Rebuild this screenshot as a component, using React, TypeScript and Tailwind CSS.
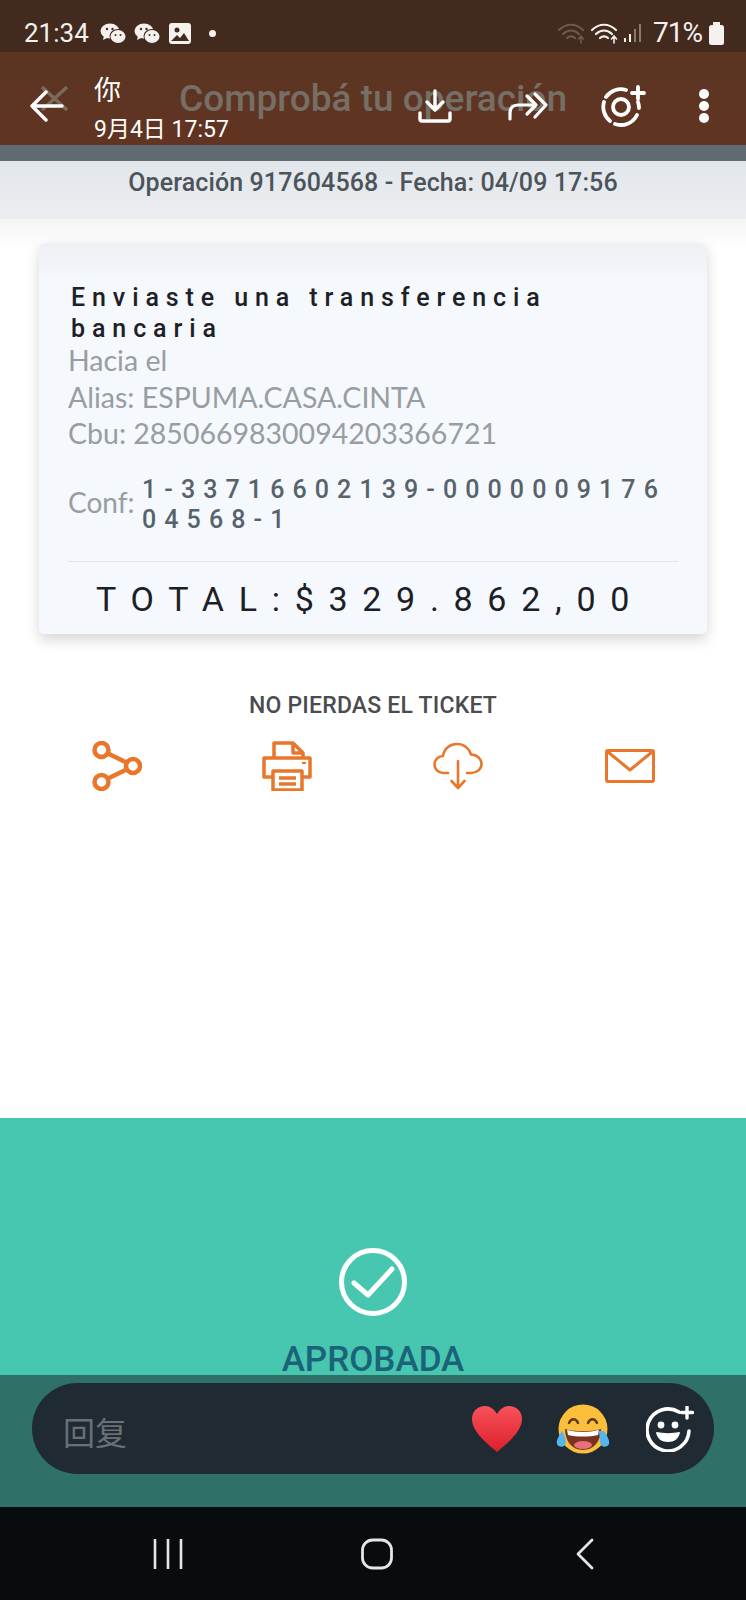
const roboto = "font-['Roboto',sans-serif]";

const WeChat = () => (
  <svg width="27" height="21" viewBox="0 0 27 21" fill="#f4f1ee">
    <ellipse cx="10" cy="8" rx="9.5" ry="7.5" />
    <path d="M4 13l-1 4 5-2.500z" />
    <ellipse cx="18" cy="13" rx="8.500" ry="7" fill="#432a1f" />
    <ellipse cx="18" cy="13.500" rx="7.500" ry="6.500" />
    <circle cx="7" cy="6" r="1.200" fill="#432a1f" />
    <circle cx="12.500" cy="6" r="1.200" fill="#432a1f" />
    <circle cx="15.500" cy="12" r="1" fill="#432a1f" />
    <circle cx="20.500" cy="12" r="1" fill="#432a1f" />
  </svg>
);

const Wifi = ({ color }: { color: string }) => (
  <svg width="30" height="24" viewBox="0 0 30 24" fill="none" stroke={color} strokeWidth="2.200" strokeLinecap="round">
    <path d="M2 9c7-7 17-7 24 0" />
    <path d="M6 13c5-4.500 11-4.500 16 0" />
    <path d="M10 17c2.500-2 5.500-2 8 0" />
    <path d="M24 15v7M21.500 18l2.500-3 2.500 3" strokeWidth="1.600" />
  </svg>
);

const ShareIcon = () => (
  <svg width="50" height="50" viewBox="0 0 50 50" fill="none" stroke="#e8772b" strokeWidth="4.500">
    <circle cx="9.500" cy="9" r="7" />
    <circle cx="9.500" cy="41" r="7" />
    <circle cx="41" cy="25" r="7" />
    <path d="M16 12.500l18.500 9M16 37.500l18.500-9" />
  </svg>
);

const PrinterIcon = () => (
  <svg width="50" height="50" viewBox="0 0 50 50" fill="none" stroke="#e8772b" strokeWidth="3.500" strokeLinejoin="round">
    <path d="M12 17V2h19l10 10v5" />
    <path d="M31 3v9h9" />
    <path d="M10 36H2V17h46v19h-8" />
    <path d="M40 22h4" strokeWidth="2" />
    <rect x="11" y="30" width="29" height="19" />
    <path d="M17 37h17M17 43h17" />
  </svg>
);

const CloudIcon = () => (
  <svg width="50" height="50" viewBox="0 0 50 50" fill="none" stroke="#e8772b" strokeWidth="2.600" strokeLinecap="round" strokeLinejoin="round">
    <path d="M15 32H10C5 32 1.500 28 1.500 23.500S5 15 10 15c1-7.500 7-12 14-12 7 0 12 4.500 14 10.500 6 0 10.500 4.500 10.500 9.500S44 32 38 32h-4" />
    <path d="M25 20v27M18.500 40l6.500 7 6.500-7" />
  </svg>
);

const MailIcon = () => (
  <svg width="50" height="34" viewBox="0 0 50 34" fill="none" stroke="#e8772b" strokeWidth="3" strokeLinejoin="round">
    <rect x="1.500" y="1.500" width="47" height="31" rx="1.500" />
    <path d="M3 3l22 18L47 3" />
  </svg>
);

const LaughEmoji = () => (
  <svg width="54" height="50" viewBox="0 0 54 50">
    <circle cx="27" cy="25" r="24.500" fill="#fbbf3c" />
    <path d="M13 19c2-5 7-5 9 0M32 19c2-5 7-5 9 0" fill="none" stroke="#5c3a14" strokeWidth="2.400" strokeLinecap="round" />
    <path d="M9 25c10 3 26 3 36 0 0 12-7 21-18 21S9 37 9 25z" fill="#7a3320" />
    <path d="M11 26c10 2.500 22 2.500 32 0l-1 5c-9 2-21 2-30 0z" fill="#fff" />
    <ellipse cx="27" cy="41" rx="9" ry="4" fill="#e8707a" />
    <path d="M6 27c-3 5-6 9-5 13 1 3 6 4 8 1 2-3 0-9-3-14zM48 27c3 5 6 9 5 13-1 3-6 4-8 1-2-3 0-9-3-14z" fill="#55b6ee" />
  </svg>
);

export default function App() {
  return (
    <div className={`${roboto} relative flex h-[1600px] w-[746px] flex-col overflow-hidden bg-white`}>
      {/* status bar */}
      <div className="relative flex h-[52px] shrink-0 items-center bg-[#432a1f] pl-6 pr-[22px] pt-[14px] text-[#f4f1ee]">
        <span className="w-[76px] text-[26px] leading-none">21:34</span>
        <WeChat />
        <span className="ml-[7px]"><WeChat /></span>
        <svg className="ml-[8px]" width="22" height="21" viewBox="0 0 22 21">
          <rect width="22" height="21" rx="3" fill="#f4f1ee" />
          <circle cx="8" cy="7" r="2.500" fill="#432a1f" />
          <path d="M2 18l6-6 3 3 4-5 5 8z" fill="#432a1f" />
        </svg>
        <span className="ml-[18px] h-[7px] w-[7px] rounded-full bg-[#f4f1ee]" />
        <div className="ml-auto flex items-center">
          <Wifi color="#6d5a50" />
          <span className="ml-[3px]"><Wifi color="#f4f1ee" /></span>
          <svg className="ml-[3px]" width="21" height="22" viewBox="0 0 21 22">
            <path d="M2 16v4M7 12v8" stroke="#f4f1ee" strokeWidth="2" />
            <path d="M12 7v13M17 2v18" stroke="#8a7a70" strokeWidth="2" />
          </svg>
          <span className="ml-[9px] w-[51px] text-[28px] leading-none tracking-[-1px]">71%</span>
          <svg className="ml-[5px]" width="15" height="23" viewBox="0 0 15 23" fill="#f4f1ee">
            <rect x="4" y="0" width="7" height="3" />
            <rect x="0" y="3" width="15" height="20" rx="2.500" />
          </svg>
        </div>
      </div>

      {/* header */}
      <div className="relative flex h-[93px] shrink-0 items-center bg-gradient-to-b from-[#5a3522] to-[#623422] pt-[14px] text-white">
        {/* page underneath, showing through */}
        <svg className="absolute left-[40px] top-[33px]" width="29" height="27" viewBox="0 0 29 27" stroke="#7b6a5c" strokeWidth="3.500">
          <path d="M2 2l25 23M27 2L2 25" />
        </svg>
        <span className="absolute left-[179px] top-[23px] text-[37px] font-medium leading-[48px] text-[#756f65]">
          Comprobá tu operación
        </span>

        <svg className="relative ml-[30px]" width="34" height="32" viewBox="0 0 34 32" fill="none" stroke="#fff" strokeWidth="3.400" strokeLinecap="round" strokeLinejoin="round">
          <path d="M32 16H3M16 2L2 16l14 14" />
        </svg>
        <div className="relative ml-[30px] mt-[6px] flex w-[137px] flex-col font-['Roboto','Noto_Sans_CJK_SC',sans-serif]">
          <span className="text-[27px] leading-[34px]">你</span>
          <span className="mt-[9px] whitespace-nowrap text-[23px] leading-[26px]">9月4日 17:57</span>
        </div>
        <svg className="relative ml-[187px]" width="34" height="34" viewBox="0 0 34 34" fill="none" stroke="#fff" strokeWidth="3.400" strokeLinecap="round" strokeLinejoin="round">
          <path d="M17 2v18M9 13l8 8 8-8" />
          <path d="M2 24v6c0 1.500 1 2 2 2h26c1 0 2-.5 2-2v-6" />
        </svg>
        <svg className="relative ml-[56px]" width="41" height="30" viewBox="0 0 41 30" fill="none" stroke="#fff" strokeWidth="3.200" strokeLinecap="round" strokeLinejoin="round">
          <path d="M2 28v-6c0-5 3-8 8-8h18M19 5l9 9-9 9" />
          <path d="M27 3l11 11-11 12" />
        </svg>
        <svg className="relative ml-[52px]" width="46" height="42" viewBox="0 0 46 42" fill="none" stroke="#fff" strokeWidth="3.800" strokeLinecap="round">
          <circle cx="20" cy="22" r="8" />
          <path d="M25 5A18 18 0 0 0 5 12M3 17a18 18 0 0 0 6 19M14 39a18 18 0 0 0 22-9M38 23a18 18 0 0 0-1-6" />
          <path d="M37 2v12M31 8h12" />
        </svg>
        <div className="relative ml-[52px] flex flex-col gap-[2px]">
          <span className="h-[10px] w-[10px] rounded-full bg-white" />
          <span className="h-[10px] w-[10px] rounded-full bg-white" />
          <span className="h-[10px] w-[10px] rounded-full bg-white" />
        </div>
      </div>

      <div className="h-4 shrink-0 bg-[#5f6a72]" />

      {/* operation strip */}
      <div className="flex h-[58px] shrink-0 justify-center bg-gradient-to-b from-[#e2e6ea] to-[#eceef1] pt-[7px] text-[25px] font-medium leading-[30px] tracking-[0.100px] text-[#4c545b]">
        Operación 917604568 - Fecha: 04/09 17:56
      </div>

      {/* page body */}
      <div className="flex flex-1 flex-col bg-gradient-to-b from-[#f4f4f4] to-white to-[30px] pt-6">
        <div className="mx-[39px] h-[391px] rounded-[6px] bg-gradient-to-b from-[#eef0f3] to-[#f5f8fc] to-[40px] px-[29px] pt-[39px] shadow-[0_6px_14px_rgba(0,0,0,0.16)]">
          <p className="pl-[3px] text-[25px] font-medium leading-[31px] tracking-[6.900px] text-[#1d2126]">
            Enviaste una transferencia bancaria
          </p>
          <div className="mt-[-2px] font-['Lato',sans-serif] text-[28.500px] leading-[36.500px] text-[#989da2]">
            <p>Hacia el</p>
            <p>Alias: ESPUMA.CASA.CINTA</p>
            <p>Cbu: 2850669830094203366721</p>
          </div>
          <div className="mt-[23px] flex items-center">
            <span className="mb-[5px] w-[74px] shrink-0 font-['Lato',sans-serif] text-[28px] text-[#989da2]">Conf:</span>
            <span className="break-all text-[25px] font-medium leading-[30px] tracking-[8.100px] text-[#56626c]">
              1-33716602139-000000917604568-1
            </span>
          </div>
          <div className="mt-[26px] h-px bg-[#e2e5e8]" />
          <p className="mt-[16px] whitespace-nowrap pl-[28px] text-[34px] leading-[42px] tracking-[14.700px] text-[#1c2026]">
            TOTAL:$329.862,00
          </p>
        </div>

        <p className="mt-[59px] text-center text-[23px] font-medium leading-[26px] tracking-[0.200px] text-[#4a4d50]">
          NO PIERDAS EL TICKET
        </p>
        <div className="mt-[22px] flex items-center pl-[92px]">
          <ShareIcon />
          <span className="ml-[120px]"><PrinterIcon /></span>
          <span className="ml-[121px]"><CloudIcon /></span>
          <span className="ml-[122px]"><MailIcon /></span>
        </div>
      </div>

      {/* approved banner */}
      <div className="flex h-[257px] shrink-0 flex-col items-center bg-[#47c6b0] pt-[130px]">
        <svg width="68" height="68" viewBox="0 0 68 68" fill="none" stroke="#fff" strokeLinecap="round" strokeLinejoin="round">
          <circle cx="34" cy="34" r="31.500" strokeWidth="5" />
          <path d="M15 35l14 12 24-26" strokeWidth="5" />
        </svg>
        <span className="mt-[29px] text-[35px] font-medium leading-[30px] text-[#1b6378]">APROBADA</span>
      </div>

      {/* reply bar */}
      <div className="h-[132px] shrink-0 bg-[#2f7068] px-8 pt-2">
        <div className="flex h-[91px] items-center rounded-[46px] bg-[#1f2a33] pl-[31px] pr-5">
          <span className="mt-[4px] font-['Noto_Sans_CJK_SC',sans-serif] text-[32px] leading-none text-[#6a7074]">回复</span>
          <svg className="ml-auto" width="52" height="46" viewBox="0 0 52 46">
            <defs>
              <linearGradient id="heart" x1="0" y1="0" x2="0" y2="1">
                <stop offset="0" stopColor="#f8525a" />
                <stop offset="1" stopColor="#dc1f2a" />
              </linearGradient>
            </defs>
            <path d="M26 46C14 36 1 25 1 13 1 5 7 0 14 0c5 0 9 3 12 8 3-5 7-8 12-8 7 0 13 5 13 13 0 12-13 23-25 33z" fill="url(#heart)" />
          </svg>
          <span className="ml-[33px]"><LaughEmoji /></span>
          <svg className="ml-[36px]" width="48" height="46" viewBox="0 0 48 46" fill="none" stroke="#fff" strokeLinecap="round">
            <path d="M33 6A21 21 0 1 0 43 25" strokeWidth="3.600" />
            <path d="M41 1v11M35.500 6.500h11" strokeWidth="3.400" />
            <circle cx="15" cy="19" r="3.400" fill="#fff" stroke="none" />
            <circle cx="29" cy="19" r="3.400" fill="#fff" stroke="none" />
            <path d="M10 26c8 1.500 16 1.500 24 0-1 7-6 10-12 10s-11-3-12-10z" fill="#fff" stroke="none" />
          </svg>
        </div>
      </div>

      {/* nav bar */}
      <div className="flex h-[93px] shrink-0 items-start bg-[#080c0e] pl-[153px] pt-[31px]">
        <svg width="30" height="32" viewBox="0 0 30 32" stroke="#e4e6e7" strokeWidth="2.600">
          <path d="M2 1v30M15 1v30M28 1v30" />
        </svg>
        <svg className="ml-[178px]" width="32" height="32" viewBox="0 0 32 32" fill="none" stroke="#e4e6e7" strokeWidth="2.800">
          <rect x="1.500" y="2" width="29" height="28" rx="10" />
        </svg>
        <svg className="ml-[183px]" width="18" height="32" viewBox="0 0 18 32" fill="none" stroke="#e4e6e7" strokeWidth="2.800" strokeLinecap="round" strokeLinejoin="round">
          <path d="M16 2L2 16l14 14" />
        </svg>
      </div>
    </div>
  );
}
